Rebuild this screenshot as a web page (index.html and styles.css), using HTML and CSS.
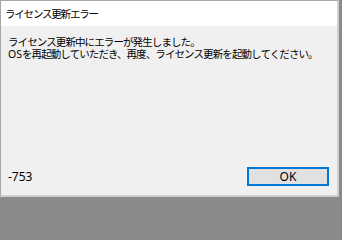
FILE: index.html
```html
<!DOCTYPE html>
<html lang="ja">
<head>
<meta charset="utf-8">
<link rel="stylesheet" href="styles.css">
</head>
<body>
<div class="window">
  <div class="titlebar">ライセンス更新エラー</div>
  <div class="content">
    <div class="message">
      <p>ライセンス更新中にエラーが発生しました。</p>
      <p><span class="latin">OS</span>を再起動していただき、再度、ライセンス更新を起動してください。</p>
    </div>
    <div class="footer">
      <span class="code">-753</span>
      <button class="ok">OK</button>
    </div>
  </div>
</div>
</body>
</html>
```
FILE: styles.css
```css
html, body {
  margin: 0;
  padding: 0;
}
body {
  width: 342px;
  height: 200px;
  background: #8a8a8a;
  overflow: hidden;
  font-family: "Noto Sans", "Noto Sans CJK JP", sans-serif;
  color: #000;
}
.window {
  box-sizing: border-box;
  width: 339px;
  height: 197px;
  border-top: 1px solid #a6a6a6;
  border-left: 1px solid #a6a6a6;
  border-right: 2px solid #cfcfcf;
  border-bottom: 2px solid #cfcfcf;
  background: #f0f0f0;
  display: flex;
  flex-direction: column;
}
.titlebar {
  height: 25px;
  background: #fff;
  font-family: "Noto Sans CJK JP", sans-serif;
  font-size: 10.5px;
  letter-spacing: -1.2px;
  line-height: 25px;
  padding-left: 4px;
}
.content {
  flex: 1;
  display: flex;
  flex-direction: column;
  padding: 10px 8px 9px 7px;
}
.message {
  flex: 1;
  font-family: "Noto Sans CJK JP", sans-serif;
  font-size: 10.5px;
  letter-spacing: -0.9px;
  line-height: 12px;
}
.message p {
  margin: 0;
}
.latin {
  font-family: "Noto Sans", sans-serif;
  letter-spacing: 0;
}
.footer {
  display: flex;
  justify-content: space-between;
  align-items: center;
}
.code {
  font-size: 12px;
}
.ok {
  box-sizing: border-box;
  width: 82px;
  height: 19px;
  border: 2px solid #0078d7;
  background: #e1e1e1;
  font-family: "Noto Sans", sans-serif;
  font-size: 12px;
  line-height: 13px;
  padding: 0;
  color: #000;
}
```
